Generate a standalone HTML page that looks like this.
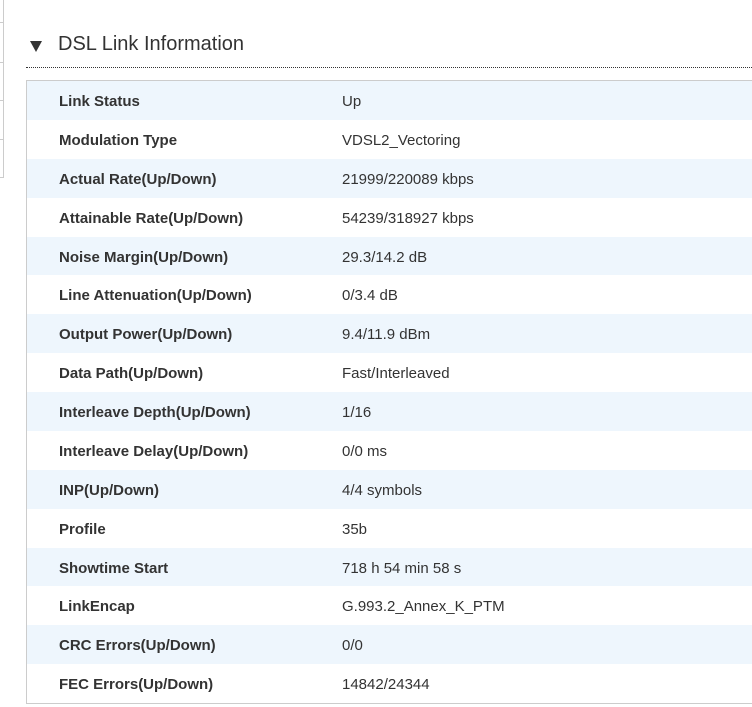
<!DOCTYPE html>
<html><head><style>
body{margin:0;width:752px;height:707px;overflow:hidden;background:#fff;font-family:"Liberation Sans",Arial,sans-serif;position:relative}
.side{position:absolute;left:0;top:0;width:3px;height:178px;border-right:1px solid #ccc}
.hl{position:absolute;left:0;width:4px;height:1px;background:#ccc}
.tri{position:absolute;left:30px;top:41px;width:0;height:0;border-left:6px solid transparent;border-right:6px solid transparent;border-top:11px solid #333}
.title{position:absolute;left:58px;top:33px;font-size:20px;color:#333}
.dots{position:absolute;left:26px;top:67px;width:726px;border-top:1px dotted #333}
.tbl{position:absolute;left:26px;top:80px;width:740px;height:622px;border:1px solid #ccc;border-right:none}
.row{height:38.88px;position:relative;font-size:15px;color:#333}
.row:nth-child(odd){background:#eef6fd}
.row b{position:absolute;left:32px;top:12px}
.row span{position:absolute;left:315px;top:12px}
</style></head><body>
<div class="side"></div>
<div class="hl" style="top:22px"></div><div class="hl" style="top:62px"></div><div class="hl" style="top:100px"></div><div class="hl" style="top:139px"></div><div class="hl" style="top:177px"></div>
<div class="tri"></div>
<div class="title">DSL Link Information</div>
<div class="dots"></div>
<div class="tbl">
<div class="row"><b>Link Status</b><span>Up</span></div>
<div class="row"><b>Modulation Type</b><span>VDSL2_Vectoring</span></div>
<div class="row"><b>Actual Rate(Up/Down)</b><span>21999/220089 kbps</span></div>
<div class="row"><b>Attainable Rate(Up/Down)</b><span>54239/318927 kbps</span></div>
<div class="row"><b>Noise Margin(Up/Down)</b><span>29.3/14.2 dB</span></div>
<div class="row"><b>Line Attenuation(Up/Down)</b><span>0/3.4 dB</span></div>
<div class="row"><b>Output Power(Up/Down)</b><span>9.4/11.9 dBm</span></div>
<div class="row"><b>Data Path(Up/Down)</b><span>Fast/Interleaved</span></div>
<div class="row"><b>Interleave Depth(Up/Down)</b><span>1/16</span></div>
<div class="row"><b>Interleave Delay(Up/Down)</b><span>0/0 ms</span></div>
<div class="row"><b>INP(Up/Down)</b><span>4/4 symbols</span></div>
<div class="row"><b>Profile</b><span>35b</span></div>
<div class="row"><b>Showtime Start</b><span>718 h 54 min 58 s</span></div>
<div class="row"><b>LinkEncap</b><span>G.993.2_Annex_K_PTM</span></div>
<div class="row"><b>CRC Errors(Up/Down)</b><span>0/0</span></div>
<div class="row"><b>FEC Errors(Up/Down)</b><span>14842/24344</span></div>
</div>
</body></html>
